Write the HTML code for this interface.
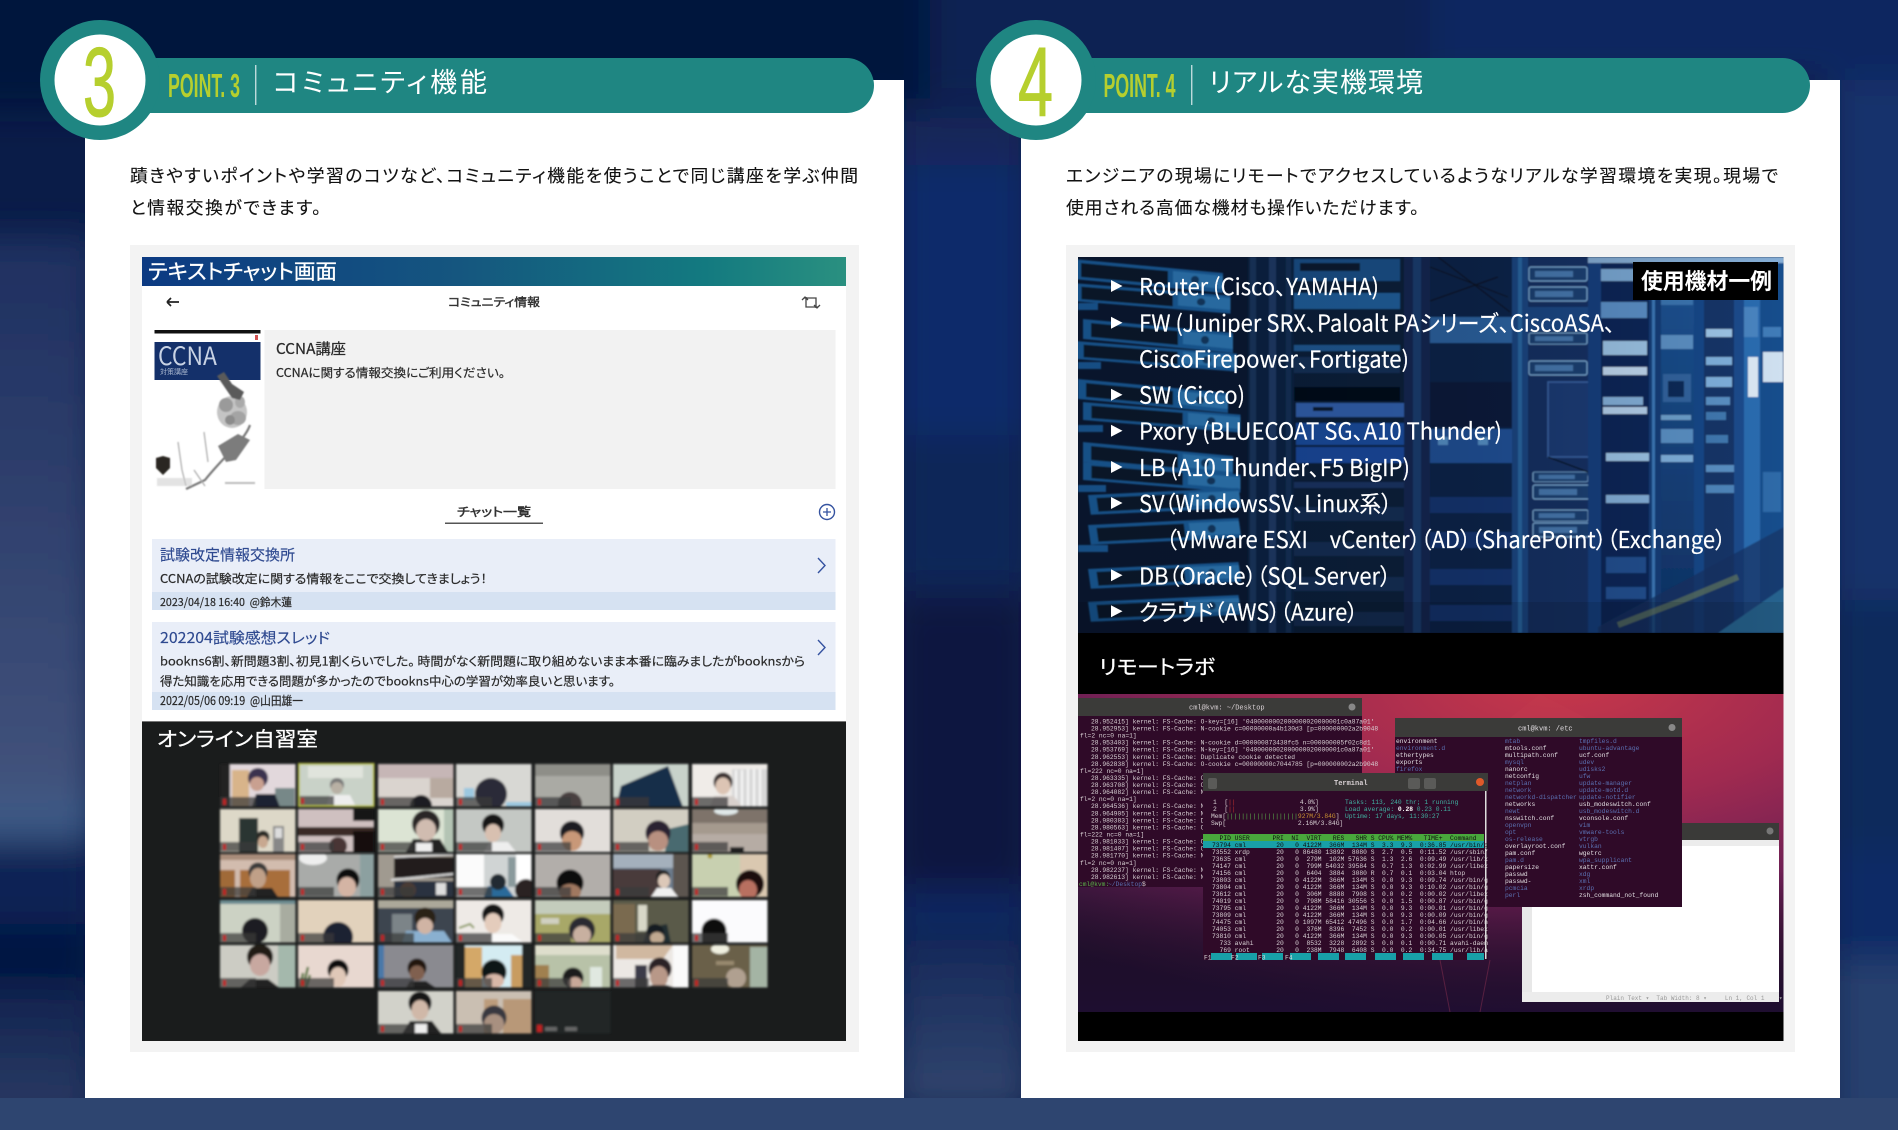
<!DOCTYPE html>
<html lang="ja"><head><meta charset="utf-8"><title>POINT</title>
<style>
html,body{margin:0;padding:0;background:#0a1c48;width:1898px;height:1130px;overflow:hidden}
svg{display:block}
text{font-family:"Noto Sans CJK JP","Liberation Sans",sans-serif;font-feature-settings:"palt";white-space:pre}
.lib{font-family:"Liberation Sans","Noto Sans CJK JP",sans-serif;font-feature-settings:normal}
.mono{font-family:"Liberation Mono","Noto Sans CJK JP",monospace;font-feature-settings:normal;font-size:6.3px}
.lime{fill:#b6cf2e}
.t{fill:#fff;font-size:27px}
.p{fill:#111;font-size:17.8px;stroke:#111;stroke-width:.12}
.sv{fill:#fff;font-size:23px;stroke:#fff;stroke-width:.15}
.tri{fill:#fff}
.d{fill:#2a2a2a;font-size:12px;stroke:#2a2a2a;stroke-width:.2}
.ti{fill:#2f4a90;font-size:15px;stroke:#2f4a90;stroke-width:.15}
.w1{fill:#d8d0d4}.bl{fill:#5a6fb0}.wh{fill:#e0dce0}.gr{fill:#5ab04a}.cy{fill:#3ab0b0}
</style></head><body>
<svg xmlns="http://www.w3.org/2000/svg" width="1898" height="1130" viewBox="0 0 1898 1130">
<defs>
<filter id="b20" filterUnits="userSpaceOnUse" x="-100" y="-100" width="2100" height="1330"><feGaussianBlur stdDeviation="17"/></filter>
<filter id="b1" filterUnits="userSpaceOnUse" x="200" y="750" width="590" height="300"><feGaussianBlur stdDeviation="1.15"/></filter>
<filter id="b08" filterUnits="userSpaceOnUse" x="-10" y="-10" width="730" height="400"><feGaussianBlur stdDeviation=".8"/></filter>
<filter id="b05"><feGaussianBlur stdDeviation=".9"/></filter>
<filter id="b03"><feGaussianBlur stdDeviation=".33"/></filter>
<filter id="bs"><feGaussianBlur stdDeviation=".2"/></filter>
<linearGradient id="hd" x1="0" x2="1" y1="0" y2="0"><stop offset="0" stop-color="#0c3a82"/><stop offset=".45" stop-color="#15567f"/><stop offset=".8" stop-color="#137a80"/><stop offset="1" stop-color="#2a9080"/></linearGradient>
<linearGradient id="lc" x1="0" x2="0" y1="0" y2="1"><stop offset="0" stop-color="#1e2f60"/><stop offset="1" stop-color="#42537c"/></linearGradient>
<linearGradient id="lb" x1="0" x2="0" y1="0" y2="1"><stop offset="0" stop-color="#10224e"/><stop offset="1" stop-color="#2c3d66"/></linearGradient>
<linearGradient id="mb" x1="0" x2="0" y1="0" y2="1"><stop offset="0" stop-color="#16295a"/><stop offset="1" stop-color="#33476f"/></linearGradient>
<linearGradient id="ov" x1="0" x2="1" y1="0" y2="0"><stop offset="0" stop-color="#000" stop-opacity=".22"/><stop offset=".55" stop-color="#000" stop-opacity=".18"/><stop offset="1" stop-color="#000" stop-opacity="0"/></linearGradient>
<linearGradient id="rk" x1="0" x2="0" y1="0" y2="1"><stop offset="0" stop-color="#1c5596"/><stop offset="1" stop-color="#0f3266"/></linearGradient>
<radialGradient id="ub" cx=".68" cy="-.05" r="1.1"><stop offset="0" stop-color="#c8384a"/><stop offset=".35" stop-color="#a02a50"/><stop offset=".65" stop-color="#6a1f55"/><stop offset="1" stop-color="#2b1538"/></radialGradient>
<linearGradient id="ub2" x1="0" x2="0" y1="0" y2="1"><stop offset="0" stop-color="#000" stop-opacity="0"/><stop offset=".55" stop-color="#000" stop-opacity="0"/><stop offset="1" stop-color="#1a0c2e" stop-opacity=".75"/></linearGradient>
<g id="L"><rect x="0" y="33" width="36" height="9.5" fill="#3a3a3a" opacity=".72"/><rect x="3" y="35" width="3" height="6" fill="#c02020"/></g>
<g id="su"><path d="M0 0L150 14V34L0 20Z" fill="#1d66ac"/><path d="M8 4L95 12V26L8 18Z" fill="#0c1e32"/><path d="M100 12L150 17V30L100 25Z" fill="#3184c8"/><circle cx="122" cy="21" r="4" fill="#12406e"/></g>
<g id="ru"><rect x="0" y="0" width="58" height="14" rx="2" fill="#1a4276" stroke="#7fb0dc" stroke-width="1.2"/><rect x="6" y="4" width="38" height="6" fill="#4a7cb4"/></g>
</defs>

<!-- background -->
<rect width="1898" height="1130" fill="#0a1c48"/>
<g filter="url(#b20)">
<rect x="-60" y="-60" width="990" height="170" fill="#06183c"/>
<rect x="930" y="-60" width="500" height="160" fill="#0a2152"/>
<rect x="1430" y="-60" width="530" height="140" fill="#0b2660"/>
<rect x="-60" y="235" width="155" height="565" fill="url(#lc)"/>
<rect x="-60" y="798" width="155" height="44" fill="#3c5a86"/>
<rect x="-60" y="848" width="155" height="76" fill="#0f2454"/>
<rect x="-60" y="925" width="155" height="58" fill="#061742"/>
<rect x="-60" y="985" width="155" height="135" fill="url(#lb)"/>
<rect x="895" y="110" width="135" height="55" fill="#12275a"/>
<rect x="895" y="165" width="135" height="270" fill="#0c2b6a"/>
<rect x="895" y="435" width="135" height="155" fill="#0a2558"/>
<rect x="895" y="600" width="135" height="285" fill="#07183f"/>
<rect x="895" y="890" width="135" height="45" fill="#0b2860"/>
<rect x="895" y="940" width="135" height="170" fill="url(#mb)"/>
<rect x="1830" y="80" width="130" height="220" fill="#14336c"/>
<rect x="1830" y="300" width="130" height="300" fill="#12306a"/>
<rect x="1830" y="600" width="130" height="250" fill="#0e2a5c"/>
<rect x="1830" y="850" width="130" height="110" fill="#0e2c66"/>
<rect x="1830" y="960" width="130" height="170" fill="#25406e"/>
</g>
<rect y="1098" width="1898" height="32" fill="#2e4570"/>

<!-- ========== POINT 3 ========== -->
<rect x="85" y="80" width="819" height="1018" fill="#fff"/>
<path d="M130 58H846.5a27.5 27.5 0 0 1 0 55H130Z" fill="#1f8682"/>
<circle cx="100" cy="80" r="60" fill="#1f8682"/>
<circle cx="100" cy="80" r="45.5" fill="#fff"/>
<text class="lib lime" x="83" y="116" font-size="98" textLength="33" lengthAdjust="spacingAndGlyphs" stroke="#b6cf2e" stroke-width="1.1">3</text>
<text class="lib lime" x="168" y="97" font-size="33" font-weight="700" textLength="72" lengthAdjust="spacingAndGlyphs">POINT. 3</text>
<rect x="255.3" y="65" width="1" height="40" fill="#fff"/>
<text class="t" x="273" y="92" textLength="214">コミュニティ機能</text>
<text class="p" x="130" y="182" textLength="728">蹟きやすいポイントや学習のコツなど、コミュニティ機能を使うことで同じ講座を学ぶ仲間</text>
<text class="p" x="130" y="214" textLength="191">と情報交換ができます。</text>
<rect x="130" y="245" width="729" height="807" fill="#f3f3f3"/>

<!-- chat screenshot -->
<rect x="142" y="257" width="704" height="464" fill="#fff"/>
<rect x="142" y="257" width="704" height="29" fill="url(#hd)"/>
<g filter="url(#bs)">
<text x="148" y="279" fill="#fff" font-size="21" stroke="#fff" stroke-width=".3" textLength="189" lengthAdjust="spacingAndGlyphs">テキストチャット画面</text>
<path d="M167 302H179M167 302l4-4M167 302l4 4" stroke="#222" stroke-width="1.7" fill="none"/>
<text x="448" y="306" fill="#333" font-size="11.5" stroke="#333" stroke-width=".4" textLength="92" lengthAdjust="spacingAndGlyphs">コミュニティ情報</text>
<path d="M804 298H816V308M820 305l-3 3-3-3M818 307H806V297M802 300l3-3 3 3" stroke="#444" stroke-width="1.3" fill="none"/>
</g>
<rect x="264.5" y="330" width="571" height="159" fill="#f2f2f2"/>
<!-- book -->
<rect x="154.5" y="330" width="110" height="159" fill="#fff"/>
<rect x="154.5" y="330" width="106" height="3.5" fill="#111"/>
<rect x="154.5" y="342" width="106" height="38" fill="#14306a"/>
<rect x="255" y="335" width="3" height="5" fill="#d05050"/>
<text x="158" y="365" fill="#c8d2e4" font-size="25" textLength="59" lengthAdjust="spacingAndGlyphs">CCNA</text>
<text x="160" y="374" fill="#aab8d0" font-size="7">対策講座</text>
<g filter="url(#b05)">
<ellipse cx="232" cy="412" rx="15" ry="16" fill="#c4c4c4"/><ellipse cx="226" cy="405" rx="7" ry="7" fill="#9a9a9a"/><ellipse cx="238" cy="418" rx="8" ry="7" fill="#a4a4a4"/><ellipse cx="230" cy="420" rx="5" ry="5" fill="#8c8c8c"/><ellipse cx="240" cy="402" rx="5" ry="6" fill="#aaa"/>
<path d="M217 376L232 398L240 400L244 392L232 384L224 372Z" fill="#5a5a5a"/>
<path d="M250 425C245 440 225 455 205 480L186 489" stroke="#777" stroke-width="2.2" fill="none"/>
<path d="M218 446L238 434L250 440L236 460L226 462Z" fill="#7c7c7c"/>
<path d="M178 442L182 470L186 486M204 432L208 462M194 470L205 486" stroke="#aaa" stroke-width="1.2" fill="none"/>
<path d="M156 458L163 456L170 458L170 468L163 475L156 468Z" fill="#2a2820"/>
<rect x="157" y="478" width="35" height="8" fill="#ccc" opacity=".55"/><rect x="225" y="482" width="30" height="2" fill="#bbb"/>
</g>
<g filter="url(#bs)">
<text x="276" y="354" fill="#2a2a2a" font-size="15" stroke="#2a2a2a" stroke-width=".25" textLength="70" lengthAdjust="spacingAndGlyphs">CCNA講座</text>
<text class="d" x="276" y="377" textLength="229" lengthAdjust="spacingAndGlyphs">CCNAに関する情報交換にご利用ください。</text>
<text x="457" y="516" fill="#333" font-size="12" stroke="#333" stroke-width=".45" textLength="74" lengthAdjust="spacingAndGlyphs">チャット一覧</text>
<rect x="445" y="522.5" width="98" height="1.5" fill="#555"/>
<circle cx="827" cy="512" r="7.5" fill="none" stroke="#3552a0" stroke-width="1.4"/><path d="M827 508V516M823 512H831" stroke="#3552a0" stroke-width="1.3"/>
</g>
<!-- list 1 -->
<rect x="152" y="539" width="683.5" height="71" fill="#e9eef8"/>
<rect x="152" y="592" width="683.5" height="18" fill="#d6e2f2"/>
<g filter="url(#bs)">
<text class="ti" x="160" y="560" textLength="135" lengthAdjust="spacingAndGlyphs">試験改定情報交換所</text>
<text class="d" x="160" y="583" textLength="327" lengthAdjust="spacingAndGlyphs">CCNAの試験改定に関する情報をここで交換してきましょう！</text>
<text class="d" x="160" y="606" textLength="132" lengthAdjust="spacingAndGlyphs" style="font-size:11px">2023/04/18 16:40  @鈴木蓮</text>
<path d="M818 558L825 565.5L818 573" stroke="#3552a0" stroke-width="1.4" fill="none"/>
</g>
<!-- list 2 -->
<rect x="152" y="622" width="683.5" height="88" fill="#e9eef8"/>
<rect x="152" y="692" width="683.5" height="18" fill="#d6e2f2"/>
<g filter="url(#bs)">
<text class="ti" x="160" y="643" textLength="170" lengthAdjust="spacingAndGlyphs">202204試験感想スレッド</text>
<text class="d" x="160" y="665.5" textLength="645" lengthAdjust="spacingAndGlyphs">bookns6割、新問題3割、初見1割くらいでした。 時間がなく新問題に取り組めないまま本番に臨みましたがbooknsから</text>
<text class="d" x="160" y="685.5" textLength="455" lengthAdjust="spacingAndGlyphs">得た知識を応用できる問題が多かったのでbookns中心の学習が効率良いと思います。</text>
<text class="d" x="160" y="705" textLength="143" lengthAdjust="spacingAndGlyphs">2022/05/06 09:19  @山田雄一</text>
<path d="M818 640L825 647.5L818 655" stroke="#3552a0" stroke-width="1.4" fill="none"/>
</g>

<!-- zoom grid -->
<rect x="142" y="721" width="704" height="320" fill="#1a1c1c"/>
<rect x="142" y="721" width="704" height="1" fill="#777"/>
<text x="157" y="746" fill="#fff" font-size="20" stroke="#fff" stroke-width=".3" textLength="161" lengthAdjust="spacingAndGlyphs">オンライン自習室</text>
<g filter="url(#b1)">
<!-- R0 -->
<svg x="220" y="764" width="75.5" height="42.5"><rect width="76" height="43" fill="#e2d8dc"/><rect x="12" y="6" width="17" height="37" fill="#d8b48a"/><rect width="10" height="43" fill="#222"/><rect x="55" y="24" width="20" height="19" fill="#788"/><path d="M32 43L36 30H55L60 43Z" fill="#1d2430"/><circle cx="38" cy="14" r="10" fill="#3a3050"/><ellipse cx="37" cy="20" rx="7" ry="7" fill="#c9a090"/><use href="#L"/></svg>
<svg x="298" y="763" width="76.5" height="44"><rect width="77" height="44" fill="#c9d2c8"/><rect x="10" y="3" width="55" height="12" fill="#e0e4dc"/><path d="M28 44L32 32H52L58 44Z" fill="#eee"/><circle cx="39" cy="22" r="7" fill="#777"/><ellipse cx="39" cy="25" rx="6" ry="6" fill="#b8b0a4"/><use href="#L"/><rect x=".75" y=".75" width="75" height="42.5" fill="none" stroke="#b8c040" stroke-width="2"/></svg>
<svg x="378" y="764" width="75.5" height="42.5"><rect width="76" height="43" fill="#dad4cf"/><rect width="76" height="14" fill="#c6b6b6"/><rect x="52" y="14" width="24" height="20" fill="#b8aaa0"/><circle cx="43" cy="42" r="11" fill="#1e1c20"/><use href="#L"/></svg>
<svg x="456" y="764" width="75.5" height="42.5"><rect width="76" height="43" fill="#d8d8d4"/><rect x="8" y="24" width="10" height="12" fill="#9cc8e0"/><rect x="50" y="38" width="26" height="5" fill="#9cc8e0"/><circle cx="35" cy="30" r="16" fill="#2c2c38"/><use href="#L"/></svg>
<svg x="535" y="764" width="75.5" height="42.5"><rect width="76" height="43" fill="#aaaaa4"/><rect width="76" height="12" fill="#8e8e88"/><circle cx="35" cy="40" r="12" fill="#4a4040"/><use href="#L"/></svg>
<svg x="613" y="764" width="75.5" height="42.5"><rect width="76" height="43" fill="#c8d2ca"/><path d="M3 43L8 22L55 2L70 43Z" fill="#182e48"/><use href="#L"/></svg>
<svg x="692" y="764" width="75.5" height="42.5"><rect width="76" height="43" fill="#f0ece8"/><rect x="40" y="5" width="36" height="38" fill="#d8d8d8"/><path d="M44 6V43M50 6V43M56 5V43M62 5V43M68 5V43" stroke="#f8f8f8" stroke-width="2"/><path d="M18 43L22 32H42L50 43Z" fill="#d8d0cc"/><circle cx="31" cy="18" r="9.5" fill="#3b3030"/><ellipse cx="31" cy="22" rx="7.5" ry="8.5" fill="#dcc4b4"/><use href="#L"/></svg>
<!-- R1 -->
<svg x="220" y="809" width="75.5" height="43"><rect width="76" height="43" fill="#ddd8c8"/><rect x="19" y="9" width="19" height="34" fill="#2a3530"/><rect x="53" y="17" width="11" height="26" fill="#888"/><rect x="55" y="19" width="7" height="10" fill="#ddd"/><circle cx="43" cy="28" r="6.5" fill="#2a2a28"/><ellipse cx="43" cy="33" rx="5" ry="6" fill="#c8a890"/><use href="#L"/></svg>
<svg x="298" y="809" width="76" height="43"><rect width="76" height="43" fill="#cfc0c0"/><rect y="18" width="76" height="9" fill="#3a2a28"/><path d="M55 0H76V12H55Z" fill="#151515"/><rect x="55" y="22" width="21" height="21" fill="#181010"/><circle cx="40" cy="37" r="9" fill="#4a3535"/><use href="#L"/></svg>
<svg x="378" y="809" width="75.5" height="43"><rect width="76" height="43" fill="#dce4d4"/><rect x="66" width="10" height="43" fill="#b4c4b4"/><path d="M28 43L35 30H62L70 43Z" fill="#222"/><rect x="38" y="34" width="16" height="9" fill="#eee"/><circle cx="48" cy="15" r="14" fill="#2a2825"/><ellipse cx="48" cy="21" rx="10" ry="11" fill="#d0bcb0"/><use href="#L"/></svg>
<svg x="456" y="809" width="75.5" height="43"><rect width="76" height="43" fill="#c4c8c4"/><path d="M28 43L34 33H52L60 43Z" fill="#eee"/><circle cx="37" cy="16" r="11" fill="#151515"/><ellipse cx="37" cy="24" rx="8" ry="9" fill="#d8c0b0"/><use href="#L"/></svg>
<svg x="535" y="809" width="75.5" height="43"><rect width="76" height="43" fill="#e2deda"/><circle cx="37" cy="24" r="12" fill="#1c1c20"/><ellipse cx="37" cy="32" rx="10" ry="10" fill="#c89878"/><use href="#L"/></svg>
<svg x="613" y="809" width="75.5" height="43"><rect width="76" height="43" fill="#d2cec2"/><path d="M55 20L76 15V43H52Z" fill="#4a6a70"/><circle cx="45" cy="24" r="12.5" fill="#2a2030"/><ellipse cx="45" cy="32" rx="10" ry="10" fill="#b89080"/><use href="#L"/></svg>
<svg x="692" y="809" width="75.5" height="43"><rect width="76" height="43" fill="#a59a8e"/><rect width="76" height="14" fill="#7e736a"/><ellipse cx="34" cy="2" rx="12" ry="4" fill="#e0e8e8"/><rect y="25" width="76" height="18" fill="#b6aca4"/><rect x="38" y="38" width="14" height="5" fill="#222"/><use href="#L"/></svg>
<!-- R2 -->
<svg x="220" y="854" width="75.5" height="43"><rect width="76" height="43" fill="#d2bcae"/><rect width="76" height="6" fill="#a88c7a"/><rect y="16" width="15" height="27" fill="#a06a38"/><rect x="20" y="16" width="50" height="27" fill="#a86e3a"/><path d="M27 43L32 34H52L58 43Z" fill="#222"/><circle cx="38" cy="18" r="9.5" fill="#3a3a3a"/><ellipse cx="38" cy="24" rx="8" ry="10" fill="#c0a088"/><use href="#L"/></svg>
<svg x="298" y="854" width="76" height="43"><rect width="76" height="43" fill="#a9aba9"/><ellipse cx="15" cy="4" rx="14" ry="7" fill="#eee"/><rect x="62" width="14" height="43" fill="#8ca0a0"/><circle cx="50" cy="26" r="11.5" fill="#111"/><ellipse cx="49" cy="33" rx="9" ry="10" fill="#d4b4a4"/><use href="#L"/></svg>
<svg x="378" y="854" width="75.5" height="43"><rect width="76" height="43" fill="#a09a90"/><rect x="16" y="3" width="60" height="21" fill="#221c1c"/><path d="M16 3L76 0M13 26L76 20" stroke="#ddd" stroke-width="2"/><rect x="16" y="27" width="60" height="16" fill="#2a3240"/><rect x="58" y="29" width="10" height="12" fill="#ddd"/><circle cx="30" cy="36" r="8" fill="#4a3a34"/><use href="#L"/></svg>
<svg x="456" y="854" width="75.5" height="43"><rect width="76" height="43" fill="#fbfbfb"/><rect x="28" width="48" height="43" fill="#d0d4d4"/><rect x="52" y="3" width="8" height="30" fill="#8a9a9c"/><rect x="60" y="0" width="16" height="30" fill="#fff"/><path d="M28 43L32 32H50L58 43Z" fill="#2a6a9a"/><circle cx="42" cy="28" r="8" fill="#222b30"/><circle cx="70" cy="36" r="11" fill="#2a2222"/><use href="#L"/></svg>
<svg x="535" y="854" width="75.5" height="43"><rect width="76" height="43" fill="#b2aeaa"/><circle cx="35" cy="29" r="13.5" fill="#111"/><ellipse cx="35" cy="38" rx="11" ry="8" fill="#a07860"/><use href="#L"/></svg>
<svg x="613" y="854" width="75.5" height="43"><rect width="76" height="43" fill="#6c7c8c"/><rect width="76" height="14" fill="#a4b0bc"/><rect y="15" width="48" height="28" fill="#4a3a3a"/><rect x="60" y="0" width="16" height="43" fill="#5c5450"/><path d="M38 43L44 34H58L65 43Z" fill="#f0f0f0"/><circle cx="50" cy="23" r="7" fill="#222"/><ellipse cx="51" cy="27" rx="6" ry="7" fill="#dcc8b8"/><use href="#L"/></svg>
<svg x="692" y="854" width="75.5" height="43"><rect width="76" height="43" fill="#c8d0b0"/><rect x="48" width="28" height="43" fill="#dac8b0"/><circle cx="18" cy="2" r="2.5" fill="#a89830"/><circle cx="58" cy="30" r="14" fill="#1a1010"/><ellipse cx="56" cy="36" rx="9" ry="10" fill="#b87060"/><use href="#L"/></svg>
<!-- R3 -->
<svg x="220" y="900" width="75.5" height="42.5"><rect width="76" height="43" fill="#ccd2c4"/><rect x="60" y="2" width="16" height="41" fill="#a8aca0"/><rect width="76" height="4" fill="#6a8a90"/><circle cx="35" cy="31" r="13" fill="#1a1a20"/><use href="#L"/></svg>
<svg x="298" y="900" width="76" height="42.5"><rect width="76" height="43" fill="#e2d2bc"/><circle cx="40" cy="37" r="15" fill="#1a2030"/><use href="#L"/></svg>
<svg x="378" y="900" width="75.5" height="42.5"><rect width="76" height="43" fill="#3c4450"/><rect width="76" height="8" fill="#aca89a"/><rect x="14" y="14" width="20" height="29" fill="#7c8488"/><path d="M24 43L28 31H66L74 43Z" fill="#8ab0d0"/><circle cx="47" cy="18" r="10.5" fill="#2a2018"/><ellipse cx="47" cy="26" rx="8" ry="8" fill="#d0b4a4"/><use href="#L"/></svg>
<svg x="456" y="900" width="75.5" height="42.5"><rect width="76" height="43" fill="#eeeae6"/><path d="M32 43L36 34H56L68 43Z" fill="#fafafa"/><circle cx="37" cy="15" r="11" fill="#151515"/><ellipse cx="37" cy="23" rx="8.5" ry="10" fill="#e4ccbc"/><path d="M3 28L14 24L18 28" stroke="#8a9a60" fill="none" stroke-width="2"/><use href="#L"/></svg>
<svg x="535" y="900" width="75.5" height="42.5"><rect width="76" height="43" fill="#a8a868"/><rect width="76" height="14" fill="#c4ccbc"/><rect x="6" y="18" width="18" height="6" fill="#d0d0c0"/><circle cx="47" cy="30" r="13" fill="#2a2a30"/><ellipse cx="47" cy="35" rx="9" ry="9" fill="#c8b0a0"/><use href="#L"/></svg>
<svg x="613" y="900" width="75.5" height="42.5"><rect width="76" height="43" fill="#5a5a48"/><rect x="0" y="4" width="22" height="39" fill="#7a6a50"/><rect x="25" y="5" width="9" height="26" fill="#d8d8c8"/><path d="M30 43L35 28L54 24L58 43Z" fill="#222e30"/><circle cx="42" cy="33" r="9" fill="#181a20"/><ellipse cx="44" cy="38" rx="7" ry="6" fill="#c0a890"/><use href="#L"/></svg>
<svg x="692" y="900" width="75.5" height="42.5"><rect width="76" height="43" fill="#fbfbfd"/><circle cx="22" cy="31" r="12.5" fill="#111"/><rect x="10" y="33" width="25" height="10" fill="#111"/><use href="#L"/></svg>
<!-- R4 -->
<svg x="220" y="945" width="75.5" height="42.5"><rect width="76" height="43" fill="#ccccc4"/><rect x="58" width="18" height="43" fill="#a4b8ac"/><path d="M20 43L30 34H48L60 43Z" fill="#222"/><circle cx="40" cy="12" r="13" fill="#201a18"/><ellipse cx="40" cy="20" rx="10" ry="11" fill="#c8a8a0"/><use href="#L"/></svg>
<svg x="298" y="945" width="76" height="42.5"><rect width="76" height="43" fill="#e8d8d0"/><path d="M2 43L5 28M5 43L10 22M8 43L12 30" stroke="#5a7a40" stroke-width="2.5" fill="none"/><circle cx="40" cy="25" r="10.5" fill="#111"/><ellipse cx="40" cy="32" rx="8" ry="10" fill="#e0c8b8"/><use href="#L"/></svg>
<svg x="378" y="945" width="75.5" height="42.5"><rect width="76" height="43" fill="#8a8a90"/><rect width="6" height="43" fill="#4a78a8"/><path d="M28 43L32 36H48L58 43Z" fill="#222"/><circle cx="39" cy="23" r="9.5" fill="#201810"/><ellipse cx="39" cy="28" rx="7.5" ry="7.5" fill="#806050"/><use href="#L"/></svg>
<svg x="456" y="945" width="75.5" height="42.5"><rect width="76" height="43" fill="#232525"/><rect x="9" width="57" height="43" fill="#d4ecf2"/><rect x="9" y="2" width="17" height="41" fill="#d4a868"/><rect x="55" y="10" width="11" height="33" fill="#c89c60"/><circle cx="38" cy="27" r="12.5" fill="#101418"/><ellipse cx="38" cy="36" rx="10" ry="7" fill="#d8b8a8"/><use href="#L"/></svg>
<svg x="535" y="945" width="75.5" height="42.5"><rect width="76" height="43" fill="#b8c2a8"/><rect width="76" height="10" fill="#dedecc"/><rect y="20" width="14" height="23" fill="#a08050"/><rect x="55" y="22" width="12" height="21" fill="#e0e8e0"/><circle cx="38" cy="33" r="10.5" fill="#1a1a1c"/><ellipse cx="40" cy="38" rx="7" ry="6" fill="#c8a898"/><use href="#L"/></svg>
<svg x="613" y="945" width="75.5" height="42.5"><rect width="76" height="43" fill="#ece8e4"/><path d="M3 0H60L50 14H3Z" fill="#d0b8a0"/><rect x="60" y="0" width="16" height="43" fill="#fafafa"/><rect x="22" y="20" width="12" height="23" fill="#3a3a48"/><circle cx="47" cy="24" r="11.5" fill="#2a2028"/><ellipse cx="46" cy="32" rx="9" ry="11" fill="#b89888"/><path d="M33 43L38 40H54L62 43Z" fill="#333"/><use href="#L"/></svg>
<svg x="692" y="945" width="75.5" height="42.5"><rect width="76" height="43" fill="#6a6048"/><ellipse cx="28" cy="4" rx="9" ry="5" fill="#f0f0e0"/><rect x="58" y="2" width="18" height="41" fill="#a4b4a4"/><rect x="24" y="16" width="18" height="4" fill="#998a70"/><circle cx="44" cy="33" r="10" fill="#b0a090"/><use href="#L"/></svg>
<!-- R5 -->
<svg x="378" y="991" width="75.5" height="42.5"><rect width="76" height="43" fill="#d2d2ca"/><path d="M24 43L32 30H54L64 43Z" fill="#222"/><rect x="37" y="33" width="12" height="10" fill="#eee"/><circle cx="42" cy="12" r="11.5" fill="#151515"/><ellipse cx="42" cy="19" rx="8.5" ry="10" fill="#d0b8a8"/><use href="#L"/></svg>
<svg x="456" y="991" width="75.5" height="42.5"><rect width="76" height="43" fill="#cabfb2"/><rect x="28" y="8" width="14" height="35" fill="#bc9c7c"/><rect x="47" y="8" width="29" height="35" fill="#b89878"/><circle cx="38" cy="27" r="12.5" fill="#383840"/><ellipse cx="38" cy="33" rx="10" ry="10" fill="#a89080"/><use href="#L"/></svg>
<svg x="535" y="991" width="75.5" height="42.5"><rect width="76" height="43" fill="#232526"/><rect x="2" y="34" width="5" height="7" fill="#c02020"/><rect x="10" y="36" width="12" height="4" fill="#666"/><rect x="30" y="36" width="12" height="4" fill="#666"/></svg>
</g>
<rect x="142" y="1037" width="704" height="4" fill="#1a1c1c"/>

<!-- ========== POINT 4 ========== -->
<rect x="1021" y="80" width="819" height="1018" fill="#fff"/>
<path d="M1066 58H1782.5a27.5 27.5 0 0 1 0 55H1066Z" fill="#1f8682"/>
<circle cx="1036" cy="80" r="60" fill="#1f8682"/>
<circle cx="1036" cy="80" r="45.5" fill="#fff"/>
<text class="lib lime" x="1018" y="116" font-size="98" textLength="35" lengthAdjust="spacingAndGlyphs" stroke="#b6cf2e" stroke-width="1.1">4</text>
<text class="lib lime" x="1103.5" y="97" font-size="33" font-weight="700" textLength="72" lengthAdjust="spacingAndGlyphs">POINT. 4</text>
<rect x="1191.3" y="65" width="1" height="40" fill="#fff"/>
<text class="t" x="1209" y="92" textLength="214">リアルな実機環境</text>
<text class="p" x="1066" y="182" textLength="712">エンジニアの現場にリモートでアクセスしているようなリアルな学習環境を実現。現場で</text>
<text class="p" x="1066" y="214" textLength="353">使用される高価な機材も操作いただけます。</text>
<rect x="1066" y="245" width="729" height="807" fill="#f3f3f3"/>

<!-- server image -->
<svg x="1078" y="257" width="705.5" height="376" viewBox="0 0 705.5 376">
<rect width="706" height="376" fill="#0b1b38"/>
<g filter="url(#b08)">
<g>
<use href="#su" transform="translate(-5,2)"/><use href="#su" transform="translate(-5,26) scale(1.05,.9)"/>
<use href="#su" transform="translate(5,62)"/><use href="#su" transform="translate(-3,84) scale(1.08,.9)"/>
<use href="#su" transform="translate(0,122)"/><use href="#su" transform="translate(5,145) scale(1.05,.9)"/>
<use href="#su" transform="translate(5,185)"/><use href="#su" transform="translate(5,205) scale(1.05,.9)"/>
<use href="#su" transform="translate(10,238) rotate(-8)"/><use href="#su" transform="translate(10,268) rotate(-8)"/>
<use href="#su" transform="translate(10,312) rotate(-8)"/><use href="#su" transform="translate(10,345) rotate(-8)"/>
<rect y="46" width="20" height="7" fill="#1a64a8"/><rect y="105" width="23" height="7" fill="#1a64a8"/><rect y="168" width="25" height="7" fill="#1a64a8"/><rect y="228" width="28" height="7" fill="#1a64a8"/><rect y="288" width="30" height="7" fill="#1a64a8"/>
</g>
<rect x="170" width="46" height="376" fill="#10264c"/>
<rect x="172" width="6" height="376" fill="#1c3a68"/><rect x="191" width="7" height="376" fill="#20406f"/><rect x="208" width="5" height="376" fill="#183460"/>
<!-- middle rack -->
<rect x="216" width="110" height="376" fill="#0e2040"/>
<rect x="216" y="2" width="106" height="22" fill="#1f5694"/><rect x="222" y="6" width="60" height="8" fill="#0c1c34"/>
<rect x="216" y="36" width="106" height="16" fill="#2266a8"/><rect x="216" y="88" width="106" height="6" fill="#2060a0"/>
<rect x="216" y="100" width="106" height="16" fill="#163460"/><rect x="216" y="130" width="106" height="14" fill="#060e1e"/>
<rect x="218" y="146" width="108" height="14" fill="#3468bc"/><rect x="235" y="150" width="20" height="4" fill="#0c1c34"/>
<rect x="218" y="166" width="108" height="22" fill="#1e52ac"/><rect x="218" y="190" width="108" height="16" fill="#1e50aa"/>
<rect x="216" y="225" width="110" height="6" fill="#1a386c"/>
<rect x="216" y="250" width="110" height="14" fill="#17305c"/><rect x="216" y="285" width="110" height="14" fill="#17305c"/><rect x="216" y="320" width="110" height="14" fill="#17305c"/><rect x="216" y="355" width="110" height="14" fill="#17305c"/>
<rect x="326" width="26" height="376" fill="#132c58"/><rect x="335" width="8" height="376" fill="#1f4278"/>
<!-- next rack -->
<rect x="352" width="82" height="376" fill="#102550"/>
<rect x="352" y="60" width="82" height="26" fill="#2f68aa"/>
<path d="M352 10L430 40M360 0L432 55M352 44L420 20" stroke="#0a1628" stroke-width="1.2" fill="none"/>
<rect x="352" y="125" width="82" height="45" fill="#0c1c40"/>
<rect x="352" y="172" width="82" height="34" fill="#2254a0"/><rect x="360" y="180" width="10" height="8" fill="#5c9ad4"/><rect x="400" y="180" width="10" height="8" fill="#5c9ad4"/>
<rect x="352" y="240" width="82" height="16" fill="#193878"/><rect x="352" y="275" width="82" height="16" fill="#193878"/><rect x="352" y="312" width="82" height="16" fill="#193878"/><rect x="352" y="348" width="82" height="16" fill="#193878"/>
<rect x="434" width="16" height="376" fill="#1a4a88"/><rect x="440" width="4" height="376" fill="#2a6aa8"/>
<!-- units rack -->
<rect x="450" width="60" height="376" fill="#143266"/>
<use href="#ru" transform="translate(451,10)"/><use href="#ru" transform="translate(451,30)"/><use href="#ru" transform="translate(451,76) scale(1,.8)"/><use href="#ru" transform="translate(451,104)"/>
<use href="#ru" transform="translate(455,215) scale(.95,.7)"/><use href="#ru" transform="translate(455,228)"/><use href="#ru" transform="translate(455,253) scale(.95,.8)"/><use href="#ru" transform="translate(455,266)"/>
<rect x="450" y="50" width="60" height="24" fill="#1f4888"/>
<rect x="470" y="125" width="53" height="75" fill="#1c3c78" stroke="#3a66a8" stroke-width="1.5"/>
<path d="M470 200L510 215L515 250" stroke="#0a1426" stroke-width="1.3" fill="none"/>
<rect x="510" width="13" height="376" fill="#184080"/>
<rect x="523" width="48" height="376" fill="#102858"/>
<rect x="523" y="12" width="46" height="12" fill="#7aa8d4"/><rect x="523" y="45" width="46" height="16" fill="#5c90c8"/><rect x="525" y="84" width="44" height="14" fill="#9cc4e6"/><rect x="525" y="110" width="44" height="8" fill="#c0d8f0"/>
<rect x="525" y="140" width="40" height="8" fill="#84b0da"/><rect x="525" y="150" width="44" height="7" fill="#b4d0ec"/><rect x="528" y="196" width="44" height="8" fill="#9cc4e6"/><rect x="528" y="238" width="44" height="8" fill="#84b0da"/><rect x="528" y="300" width="40" height="16" fill="#205090"/><rect x="528" y="330" width="40" height="12" fill="#205090"/>
<rect x="571" width="12" height="376" fill="#143c78"/><rect x="574" width="3" height="376" fill="#3a78b8"/>
<rect x="583" width="33" height="376" fill="url(#rk)"/>
<rect x="583" y="78" width="32" height="14" fill="#5c90c4"/><rect x="585" y="117" width="28" height="28" fill="#31639e"/><rect x="590" y="124" width="16" height="16" fill="#102a58"/><rect x="583" y="158" width="30" height="5" fill="#6da0cc"/><rect x="583" y="172" width="32" height="14" fill="#5a90c4"/><rect x="583" y="198" width="32" height="7" fill="#7fb0dc"/><rect x="583" y="40" width="32" height="8" fill="#3a74b0"/>
<rect x="616" width="10" height="376" fill="#174688"/>
<rect x="626" width="30" height="376" fill="#123468"/>
<rect x="628" y="72" width="26" height="8" fill="#9cc4e6"/><rect x="628" y="100" width="26" height="8" fill="#7fb0dc"/><rect x="628" y="120" width="26" height="10" fill="#7fb0dc"/><rect x="628" y="140" width="24" height="8" fill="#5a90c4"/><rect x="628" y="155" width="20" height="8" fill="#3f78b0"/><rect x="628" y="178" width="22" height="8" fill="#3f78b0"/><rect x="628" y="208" width="32" height="7" fill="#5a90c4"/><rect x="628" y="228" width="30" height="8" fill="#4f86bc"/>
<rect x="656" width="10" height="376" fill="#1a4c8c"/>
<rect x="666" width="16" height="376" fill="#2a6cb0"/><rect x="670" y="100" width="10" height="40" fill="#dbe8f4"/><rect x="666" y="50" width="14" height="30" fill="#4884c0"/>
<rect x="682" width="24" height="376" fill="#154e8c"/><rect x="685" y="95" width="20" height="30" fill="#cfe0f0"/><rect x="685" y="70" width="18" height="10" fill="#3f7cb8"/><rect x="685" y="215" width="18" height="40" fill="#2f6aa8"/>
<path d="M520 370L706 270V376H520Z" fill="#143262" opacity=".7"/>
<path d="M640 376L706 330V376Z" fill="#27628e"/>
<path d="M540 368L600 345L660 320" stroke="#7c8c5c" stroke-width="6" fill="none" opacity=".55"/>
<rect x="510" width="196" height="6" fill="#86aed6"/>
</g>
<rect width="706" height="376" fill="url(#ov)"/>
<rect y="345" width="706" height="31" fill="#000" opacity=".1"/>
</svg>
<g filter="url(#bs)">
<text class="sv" x="1139" y="295" textLength="240" lengthAdjust="spacingAndGlyphs">Router (Cisco、YAMAHA)</text>
<text class="sv" x="1139" y="331.7" textLength="476" lengthAdjust="spacingAndGlyphs">FW (Juniper SRX、Paloalt PAシリーズ、CiscoASA、</text>
<text class="sv" x="1139" y="367.7" textLength="270" lengthAdjust="spacingAndGlyphs">CiscoFirepower、Fortigate)</text>
<text class="sv" x="1139" y="403.7" textLength="106" lengthAdjust="spacingAndGlyphs">SW (Cicco)</text>
<text class="sv" x="1139" y="439.7" textLength="363" lengthAdjust="spacingAndGlyphs">Pxory (BLUECOAT SG、A10 Thunder)</text>
<text class="sv" x="1139" y="476" textLength="271" lengthAdjust="spacingAndGlyphs">LB (A10 Thunder、F5 BigIP)</text>
<text class="sv" x="1139" y="512" textLength="253" lengthAdjust="spacingAndGlyphs">SV（WindowsSV、Linux系）</text>
<text class="sv" x="1166" y="548" textLength="560" lengthAdjust="spacingAndGlyphs">（VMware ESXI　vCenter）（AD）（SharePoint）（Exchange）</text>
<text class="sv" x="1139" y="584.3" textLength="252" lengthAdjust="spacingAndGlyphs">DB（Oracle）（SQL Server）</text>
<text class="sv" x="1139" y="620.3" textLength="219" lengthAdjust="spacingAndGlyphs">クラウド（AWS）（Azure）</text>
<g class="tri">
<path d="M1111 280V292L1122.5 286Z"/><path d="M1111 316.7V328.7L1122.5 322.7Z"/><path d="M1111 388.7V400.7L1122.5 394.7Z"/><path d="M1111 424.7V436.7L1122.5 430.7Z"/><path d="M1111 461V473L1122.5 467Z"/><path d="M1111 497V509L1122.5 503Z"/><path d="M1111 569.3V581.3L1122.5 575.3Z"/><path d="M1111 605.3V617.3L1122.5 611.3Z"/>
</g>
</g>
<rect x="1633" y="262" width="145" height="38" fill="#000"/>
<text x="1641" y="289" fill="#fff" font-size="22" font-weight="700" textLength="131" lengthAdjust="spacingAndGlyphs">使用機材一例</text>

<!-- black band + ubuntu -->
<rect x="1078" y="633" width="705.5" height="408" fill="#000"/>
<text x="1099" y="674" fill="#fff" font-size="20" stroke="#fff" stroke-width=".25" textLength="116" lengthAdjust="spacingAndGlyphs">リモートラボ</text>
<svg x="1078" y="694" width="705.5" height="318" viewBox="1078 694 705.5 318">
<rect x="1078" y="694" width="706" height="318" fill="url(#ub)"/>
<rect x="1078" y="694" width="706" height="318" fill="url(#ub2)"/>
<path d="M1540 694L1590 720L1520 800L1470 750Z" fill="#c23c50" opacity=".35"/>
<path d="M1440 960L1450 1012M1490 960L1480 1012" stroke="#8a3050" stroke-width="1" opacity=".5"/>

<!-- gedit -->
<rect x="1522" y="823" width="257" height="179" fill="#fff"/>
<rect x="1522" y="823" width="257" height="17" fill="#3a3a38"/>
<rect x="1522" y="840" width="257" height="6" fill="#ececec"/>
<rect x="1522" y="840" width="10" height="152" fill="#e8e8e8"/>
<rect x="1522" y="992" width="257" height="10" fill="#ececec"/>
<g filter="url(#b03)"><text class="mono" x="1690" y="829" style="fill:#aaa;font-size:7px" transform="translate(-60,5)">Save</text>
<circle cx="1770" cy="831" r="3.5" fill="#777"/>
<text class="mono" x="1606" y="1000" style="fill:#999;font-size:6px">Plain Text ▾  Tab Width: 8 ▾     Ln 1, Col 1    ▾  INS</text></g>

<!-- left terminal -->
<rect x="1078" y="698" width="284" height="189" fill="#2f0a28"/>
<rect x="1078" y="698" width="284" height="18" fill="#3b3b39"/>
<circle cx="1352" cy="707" r="3.5" fill="#888"/>
<g filter="url(#b03)" class="w1">
<text class="mono" x="1189" y="709.5" style="font-size:7px">cml@kvm: ~/Desktop</text>
<text class="mono" x="1091" y="723.5">28.952415] kernel: FS-Cache: O-key=[16] '0400000002000000020000001c0a87a01'</text>
<text class="mono" x="1091" y="730.5">28.952953] kernel: FS-Cache: N-cookie c=00000000a4b130d3 [p=000000002a2b9048</text>
<text class="mono" x="1080" y="737.6">fl=2 nc=0 na=1]</text>
<text class="mono" x="1091" y="744.6">28.953403] kernel: FS-Cache: N-cookie d=000000873438fc5 n=000000005f02c8d1</text>
<text class="mono" x="1091" y="751.7">28.953769] kernel: FS-Cache: N-key=[16] '0400000002000000020000001c0a87a01'</text>
<text class="mono" x="1091" y="758.8">28.962553] kernel: FS-Cache: Duplicate cookie detected</text>
<text class="mono" x="1091" y="765.8">28.962838] kernel: FS-Cache: O-cookie c=00000000c7044785 [p=000000002a2b9048</text>
<text class="mono" x="1080" y="772.9">fl=222 nc=0 na=1]</text>
<text class="mono" x="1091" y="780">28.963335] kernel: FS-Cache: O-c</text>
<text class="mono" x="1091" y="787">28.963708] kernel: FS-Cache: O-k</text>
<text class="mono" x="1091" y="794">28.964082] kernel: FS-Cache: N-c</text>
<text class="mono" x="1080" y="801.2">fl=2 nc=0 na=1]</text>
<text class="mono" x="1091" y="808.2">28.964536] kernel: FS-Cache: N-c</text>
<text class="mono" x="1091" y="815.3">28.964905] kernel: FS-Cache: N-k</text>
<text class="mono" x="1091" y="822.4">28.980383] kernel: FS-Cache: Dup</text>
<text class="mono" x="1091" y="829.4">28.980563] kernel: FS-Cache: O-c</text>
<text class="mono" x="1080" y="836.5">fl=222 nc=0 na=1]</text>
<text class="mono" x="1091" y="843.6">28.981033] kernel: FS-Cache: O-c</text>
<text class="mono" x="1091" y="850.6">28.981407] kernel: FS-Cache: O-k</text>
<text class="mono" x="1091" y="857.7">28.981770] kernel: FS-Cache: N-c</text>
<text class="mono" x="1080" y="864.8">fl=2 nc=0 na=1]</text>
<text class="mono" x="1091" y="871.8">28.982237] kernel: FS-Cache: N-c</text>
<text class="mono" x="1091" y="878.9">28.982613] kernel: FS-Cache: N-k</text>
<text class="mono gr" x="1079" y="886" style="fill:#5ab04a">cml@kvm:</text><text class="mono bl" x="1108" y="886">~/Desktop</text><text class="mono" x="1142" y="886">$</text>
</g>

<!-- etc terminal -->
<rect x="1395" y="718" width="287" height="189" fill="#2f0a28"/>
<rect x="1395" y="718" width="287" height="19" fill="#3b3b39"/>
<circle cx="1672" cy="727.5" r="3.5" fill="#888"/>
<g filter="url(#b03)">
<text class="mono wh" x="1518" y="730.5" style="font-size:7px">cml@kvm: /etc</text>
<text class="mono wh" x="1396" y="743">environment</text><text class="mono bl" x="1396" y="750">environment.d</text><text class="mono wh" x="1396" y="757">ethertypes</text><text class="mono wh" x="1396" y="764">exports</text><text class="mono bl" x="1396" y="771">firefox</text>
<text class="mono bl" x="1505" y="743">mtab</text><text class="mono wh" x="1505" y="750">mtools.conf</text><text class="mono wh" x="1505" y="757">multipath.conf</text><text class="mono bl" x="1505" y="764">mysql</text><text class="mono wh" x="1505" y="771">nanorc</text><text class="mono wh" x="1505" y="778">netconfig</text><text class="mono bl" x="1505" y="785">netplan</text><text class="mono bl" x="1505" y="792">network</text><text class="mono bl" x="1505" y="799">networkd-dispatcher</text><text class="mono wh" x="1505" y="806">networks</text><text class="mono bl" x="1505" y="813">newt</text><text class="mono wh" x="1505" y="820">nsswitch.conf</text><text class="mono bl" x="1505" y="827">openvpn</text><text class="mono bl" x="1505" y="834">opt</text><text class="mono bl" x="1505" y="841">os-release</text><text class="mono wh" x="1505" y="848">overlayroot.conf</text><text class="mono wh" x="1505" y="855">pam.conf</text><text class="mono bl" x="1505" y="862">pam.d</text><text class="mono wh" x="1505" y="869">papersize</text><text class="mono wh" x="1505" y="876">passwd</text><text class="mono wh" x="1505" y="883">passwd-</text><text class="mono bl" x="1505" y="890">pcmcia</text><text class="mono bl" x="1505" y="897">perl</text>
<text class="mono bl" x="1579" y="743">tmpfiles.d</text><text class="mono bl" x="1579" y="750">ubuntu-advantage</text><text class="mono wh" x="1579" y="757">ucf.conf</text><text class="mono bl" x="1579" y="764">udev</text><text class="mono bl" x="1579" y="771">udisks2</text><text class="mono bl" x="1579" y="778">ufw</text><text class="mono bl" x="1579" y="785">update-manager</text><text class="mono bl" x="1579" y="792">update-motd.d</text><text class="mono bl" x="1579" y="799">update-notifier</text><text class="mono wh" x="1579" y="806">usb_modeswitch.conf</text><text class="mono bl" x="1579" y="813">usb_modeswitch.d</text><text class="mono wh" x="1579" y="820">vconsole.conf</text><text class="mono bl" x="1579" y="827">vim</text><text class="mono bl" x="1579" y="834">vmware-tools</text><text class="mono bl" x="1579" y="841">vtrgb</text><text class="mono bl" x="1579" y="848">vulkan</text><text class="mono wh" x="1579" y="855">wgetrc</text><text class="mono bl" x="1579" y="862">wpa_supplicant</text><text class="mono wh" x="1579" y="869">xattr.conf</text><text class="mono bl" x="1579" y="876">xdg</text><text class="mono bl" x="1579" y="883">xml</text><text class="mono bl" x="1579" y="890">xrdp</text><text class="mono wh" x="1579" y="897">zsh_command_not_found</text>
</g>

<!-- htop -->
<svg x="1203" y="773" width="285" height="188" viewBox="1203 773 285 188">
<rect x="1203" y="773" width="285" height="187" fill="#2f0a28"/>
<rect x="1203" y="773" width="285" height="18" fill="#3b3b39"/>
<rect x="1208" y="778" width="9" height="11" fill="#5a5a58" rx="2"/><rect x="1408" y="778" width="12" height="11" fill="#5a5a58" rx="2"/><rect x="1424" y="778" width="12" height="11" fill="#5a5a58" rx="2"/>
<circle cx="1480" cy="782" r="4" fill="#e0592a"/>
<rect x="1485" y="791" width="1.5" height="168" fill="#ddd"/>
<rect x="1203" y="834" width="281" height="7" fill="#49a83c"/>
<rect x="1203" y="841" width="281" height="7" fill="#18a0a8"/>
<g filter="url(#b03)" class="w1">
<text class="mono" x="1334" y="785" style="font-size:7px;font-weight:700">Terminal</text>
<text class="mono" x="1213" y="804">1  [<tspan style="fill:#c03030">||</tspan>                 4.0%]</text>
<text class="mono" x="1213" y="811">2  [<tspan style="fill:#c03030">||</tspan>                 3.9%]</text>
<text class="mono" x="1211" y="818">Mem[<tspan style="fill:#5ab04a">|||||||||||||||||||</tspan><tspan style="fill:#c89030">927M/3.84G</tspan>]</text>
<text class="mono" x="1211" y="825">Swp[                   2.16M/3.84G]</text>
<text class="mono" x="1345" y="804" style="fill:#40b0a0">Tasks: 113, 240 thr; 1 running</text>
<text class="mono" x="1345" y="811" style="fill:#40b0a0">Load average: <tspan style="fill:#fff;font-weight:700">0.28</tspan> 0.23 0.11</text>
<text class="mono" x="1345" y="818" style="fill:#40b0a0">Uptime: 17 days, 11:30:27</text>
<text class="mono" x="1212" y="840" style="fill:#111">  PID USER      PRI  NI  VIRT   RES   SHR S CPU% MEM%   TIME+  Command</text>
<text class="mono" x="1212" y="847" style="fill:#111">73794 cml        20   0 4122M  366M  134M S  3.3  9.3  0:36.85 /usr/bin/gnome-</text>
<text class="mono" x="1212" y="854">73552 xrdp       20   0 86480 13892  8080 S  2.7  0.5  0:11.52 /usr/sbin/xrdp</text>
<text class="mono" x="1212" y="861">73635 cml        20   0  279M  102M 57636 S  1.3  2.6  0:09.49 /usr/lib/xorg/X</text>
<text class="mono" x="1212" y="868">74147 cml        20   0  799M 54032 39584 S  0.7  1.3  0:02.99 /usr/libexec/gn</text>
<text class="mono" x="1212" y="875">74156 cml        20   0  6404  3884  3080 R  0.7  0.1  0:03.04 htop</text>
<text class="mono" x="1212" y="882">73803 cml        20   0 4122M  366M  134M S  0.0  9.3  0:09.74 /usr/bin/gnome-</text>
<text class="mono" x="1212" y="889">73804 cml        20   0 4122M  366M  134M S  0.0  9.3  0:10.02 /usr/bin/gnome-</text>
<text class="mono" x="1212" y="896">73612 cml        20   0  306M  8888  7908 S  0.0  0.2  0:00.02 /usr/libexec/gv</text>
<text class="mono" x="1212" y="903">74019 cml        20   0  798M 58416 30556 S  0.0  1.5  0:00.87 /usr/bin/gedit</text>
<text class="mono" x="1212" y="910">73795 cml        20   0 4122M  366M  134M S  0.0  9.3  0:00.01 /usr/bin/gnome-</text>
<text class="mono" x="1212" y="917">73809 cml        20   0 4122M  366M  134M S  0.0  9.3  0:00.09 /usr/bin/gnome-</text>
<text class="mono" x="1212" y="924">74475 cml        20   0 1097M 65412 47496 S  0.0  1.7  0:04.66 /usr/bin/nautil</text>
<text class="mono" x="1212" y="931">74053 cml        20   0  376M  8396  7452 S  0.0  0.2  0:00.01 /usr/libexec/gv</text>
<text class="mono" x="1212" y="938">73810 cml        20   0 4122M  366M  134M S  0.0  9.3  0:00.05 /usr/bin/gnome-</text>
<text class="mono" x="1212" y="945">  733 avahi      20   0  8532  3228  2892 S  0.0  0.1  0:00.71 avahi-daemon: r</text>
<text class="mono" x="1212" y="952">  769 root       20   0  238M  7948  6408 S  0.0  0.2  0:34.75 /usr/lib/accoun</text>
</g>
<rect x="1211" y="953" width="21" height="7" fill="#18a0a8"/><rect x="1236" y="953" width="21" height="7" fill="#18a0a8"/><rect x="1262" y="953" width="21" height="7" fill="#18a0a8"/><rect x="1290" y="953" width="21" height="7" fill="#18a0a8"/><rect x="1318" y="953" width="21" height="7" fill="#18a0a8"/><rect x="1345" y="953" width="21" height="7" fill="#18a0a8"/><rect x="1375" y="953" width="21" height="7" fill="#18a0a8"/><rect x="1403" y="953" width="21" height="7" fill="#18a0a8"/><rect x="1432" y="953" width="21" height="7" fill="#18a0a8"/><rect x="1467" y="953" width="17" height="7" fill="#18a0a8"/>
<text class="mono" x="1204" y="959.5" style="fill:#ddd">F1</text><text class="mono" x="1231" y="959.5" style="fill:#ddd">F2</text><text class="mono" x="1258" y="959.5" style="fill:#ddd">F3</text><text class="mono" x="1285" y="959.5" style="fill:#ddd">F4</text>
</svg>
</svg>
</svg>
</body></html>
